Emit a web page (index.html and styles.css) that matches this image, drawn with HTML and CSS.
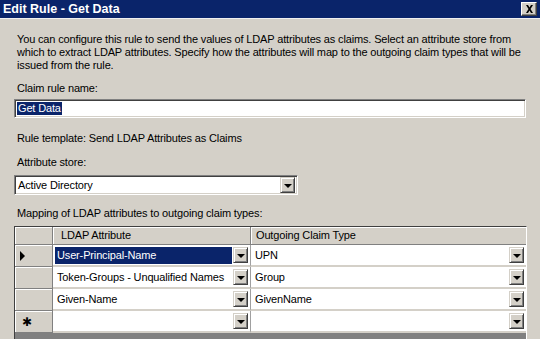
FILE: index.html
```html
<!DOCTYPE html>
<html>
<head>
<meta charset="utf-8">
<link rel="stylesheet" href="styles.css">
</head>
<body>
<div class="dialog">
  <div class="titlebar">
    <span class="title">Edit Rule - Get Data</span>
    <span class="close"><svg width="9" height="8" viewBox="0 0 9 8"><path d="M1 0h2l1.5 2.5L6 0h2L5.5 4 8 8H6L4.5 5.5 3 8H1l2.5-4z" fill="#000"/></svg></span>
  </div>
  <div class="content">
    <p class="desc">You can configure this rule to send the values of LDAP attributes as claims. Select an attribute store from which to extract LDAP attributes. Specify how the attributes will map to the outgoing claim types that will be issued from the rule.</p>
    <div class="label l-name">Claim rule name:</div>
    <div class="textbox"><span class="sel">Get Data</span></div>
    <div class="label l-tpl">Rule template: Send LDAP Attributes as Claims</div>
    <div class="label l-store">Attribute store:</div>
    <div class="combo"><span class="combo-text">Active Directory</span><span class="ddbtn"><i class="tri"></i></span></div>
    <div class="label l-map">Mapping of LDAP attributes to outgoing claim types:</div>
    <div class="grid">
      <div class="hdr rh"></div>
      <div class="hdr">LDAP Attribute</div>
      <div class="hdr">Outgoing Claim Type</div>

      <div class="rh"><i class="arrow"></i></div>
      <div class="cell"><span class="val selected">User-Principal-Name</span><span class="ddbtn"><i class="tri"></i></span></div>
      <div class="cell"><span class="val">UPN</span><span class="ddbtn"><i class="tri"></i></span></div>

      <div class="rh"></div>
      <div class="cell"><span class="val">Token-Groups - Unqualified Names</span><span class="ddbtn"><i class="tri"></i></span></div>
      <div class="cell"><span class="val">Group</span><span class="ddbtn"><i class="tri"></i></span></div>

      <div class="rh"></div>
      <div class="cell"><span class="val">Given-Name</span><span class="ddbtn"><i class="tri"></i></span></div>
      <div class="cell"><span class="val">GivenName</span><span class="ddbtn"><i class="tri"></i></span></div>

      <div class="rh"><span class="star">✱</span></div>
      <div class="cell"><span class="val"></span><span class="ddbtn"><i class="tri"></i></span></div>
      <div class="cell"><span class="val"></span><span class="ddbtn"><i class="tri"></i></span></div>
    </div>
  </div>
</div>
</body>
</html>
```
FILE: styles.css
```css
* { box-sizing: border-box; }
html, body { margin: 0; padding: 0; }
body {
  width: 540px;
  height: 339px;
  overflow: hidden;
  background: #d4d0c8;
  font-family: "Liberation Sans", Arial, sans-serif;
  font-size: 11px;
  letter-spacing: -0.15px;
  color: #000;
}
.dialog { width: 540px; height: 339px; display: flex; flex-direction: column; }
.titlebar {
  height: 19px;
  background: #0a246a;
  border-bottom: 1px solid #f0f0f0;
  display: flex;
  align-items: center;
  justify-content: space-between;
  padding: 0 3px 0 3px;
}
.title {
  color: #fff;
  font-family: "Liberation Sans", Arial, sans-serif;
  font-weight: bold;
  font-size: 12.5px;
  letter-spacing: 0;
  line-height: 18px;
}
.close {
  width: 16px;
  height: 14px;
  background: #d4d0c8;
  border: 1px solid;
  border-color: #fff #404040 #404040 #fff;
  box-shadow: inset -1px -1px 0 #808080;
  display: flex;
  align-items: center;
  justify-content: center;
}
.content { padding: 14px 13px 0 14px; display: flex; flex-direction: column; align-items: flex-start; }
.desc { margin: 0 0 0 3px; line-height: 13px; width: 512px; }
.label { margin-left: 3px; line-height: 13px; }
.l-name { margin-top: 10px; }
.l-tpl { margin-top: 14px; }
.l-store { margin-top: 11px; }
.l-map { margin-top: 12px; }
.textbox {
  margin-top: 4px;
  width: 512px;
  height: 19px;
  background: #fff;
  border: 1px solid;
  border-color: #808080 #fff #fff #808080;
  box-shadow: inset 1px 1px 0 #404040, inset -1px -1px 0 #d4d0c8;
  padding: 2px 0 0 2px;
  line-height: 13px;
}
.sel { background: #0a246a; color: #fff; padding: 0 1px; display: inline-block; }
.combo {
  margin-top: 6px;
  width: 284px;
  height: 20px;
  background: #fff;
  border: 1px solid;
  border-color: #808080 #fff #fff #808080;
  box-shadow: inset 1px 1px 0 #404040, inset -1px -1px 0 #d4d0c8;
  display: flex;
  align-items: center;
  padding: 2px 2px 2px 3px;
}
.combo-text { flex: 1; }
.ddbtn {
  width: 15px;
  height: 16px;
  background: #d4d0c8;
  border: 1px solid;
  border-color: #d4d0c8 #404040 #404040 #d4d0c8;
  box-shadow: inset 1px 1px 0 #fff, inset -1px -1px 0 #808080;
  display: flex;
  align-items: center;
  justify-content: center;
  flex: none;
}
.tri {
  width: 0; height: 0;
  border-left: 4px solid transparent;
  border-right: 4px solid transparent;
  border-top: 4px solid #000;
  margin-top: 1px;
}
.grid {
  margin-top: 6px;
  width: 513px;
  height: 120px;
  background: #808080;
  border: 1px solid;
  border-color: #404040 #fff #fff #404040;
  display: grid;
  grid-template-columns: 38px 198px 1fr;
  grid-template-rows: 18px 22px 22px 22px 22px;
  align-content: start;
}
.hdr {
  background: #d4d0c8;
  border-right: 1px solid #808080;
  border-bottom: 1px solid #808080;
  box-shadow: inset 1px 1px 0 #fff;
  padding: 2px 0 0 8px;
  line-height: 13px;
  white-space: nowrap;
}
.hdr:nth-child(3) { padding-left: 5px; border-right: none; }
.rh {
  background: #d4d0c8;
  border-right: 1px solid #808080;
  border-bottom: 1px solid #808080;
  box-shadow: inset 1px 1px 0 #fff;
  display: flex;
  align-items: center;
  padding-left: 5px;
}
.arrow {
  width: 0; height: 0;
  border-top: 5px solid transparent;
  border-bottom: 5px solid transparent;
  border-left: 5px solid #000;
}
.star { font-size: 12px; line-height: 12px; margin-left: 2px; }
.cell {
  background: #fff;
  border-right: 1px solid #a0a0a0;
  border-bottom: 2px solid #d4d0c8;
  display: flex;
  align-items: center;
  padding: 1px 2px 1px 2px;
}
.cell:nth-child(3n) { border-right: none; }
.val {
  flex: 1;
  height: 17px;
  line-height: 17px;
  padding-left: 2px;
  white-space: nowrap;
  overflow: hidden;
}
.val.selected { background: #0a246a; color: #fff; margin-right: 1px; }
```
